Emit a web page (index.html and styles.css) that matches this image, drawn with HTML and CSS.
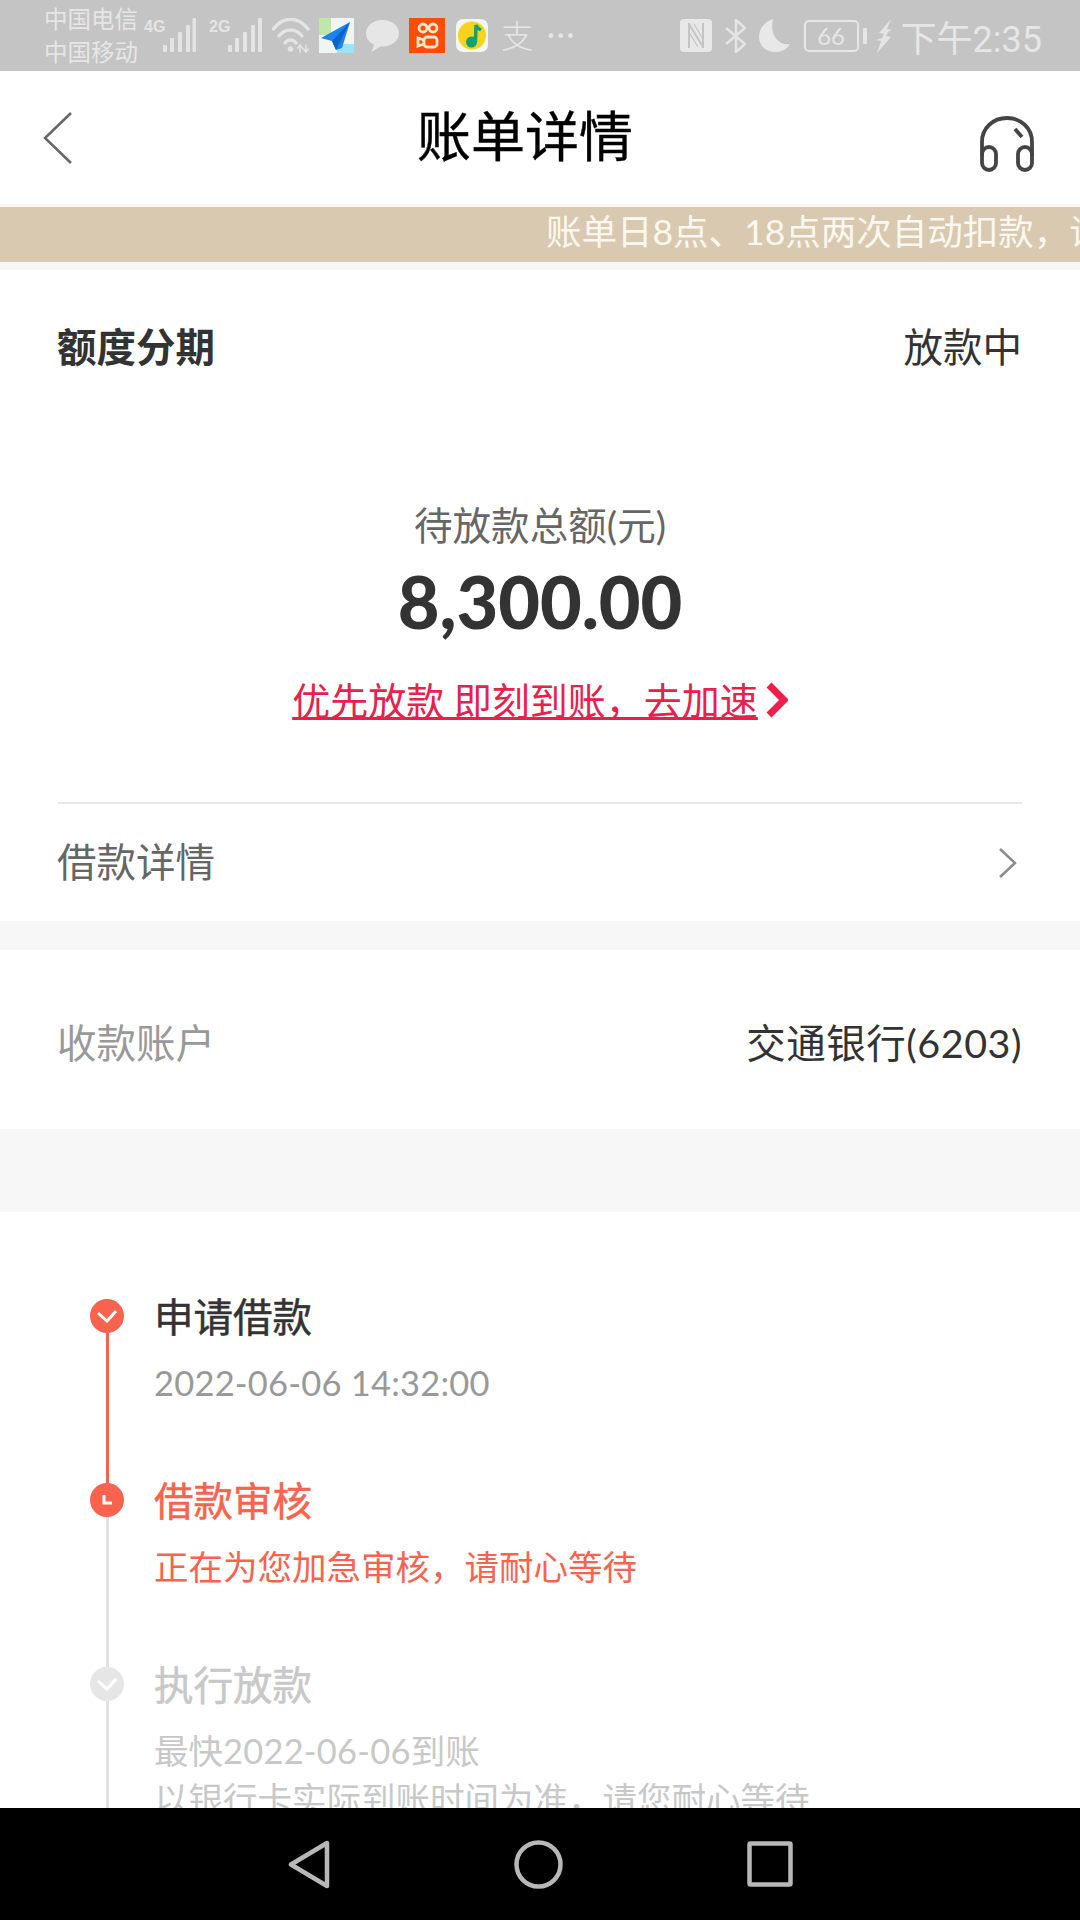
FILE: index.html
```html
<!DOCTYPE html>
<html lang="zh-CN">
<head>
    <meta charset="UTF-8">
    <title>账单详情</title>
    <link rel="stylesheet" href="styles.css">
</head>
<body>
    <div class="status-bar">
        <div class="status-left">
            <div class="carrier"><span>中国电信</span><span>中国移动</span></div>
            <svg class="signal" width="52" height="35" viewBox="0 0 52 35">
                <text x="0" y="14" class="net-type">4G</text>
                <g fill="#e4e4e4"><rect x="19" y="27" width="4" height="7" rx="1"/><rect x="26" y="20" width="4" height="14" rx="1"/><rect x="34" y="14" width="4" height="20" rx="1"/><rect x="42" y="7" width="4" height="27" rx="1"/><rect x="48.500" y="0" width="3.500" height="34" rx="1"/></g>
            </svg>
            <svg class="signal gap-13" width="53" height="35" viewBox="0 0 53 35">
                <text x="0" y="14" class="net-type">2G</text>
                <g fill="#e4e4e4"><rect x="19" y="27" width="4" height="7" rx="1"/><rect x="26" y="20" width="4" height="14" rx="1"/><rect x="34" y="14" width="4" height="20" rx="1"/><rect x="42" y="7" width="4" height="27" rx="1"/><rect x="49" y="0" width="4" height="34" rx="1"/></g>
            </svg>
            <svg class="gap-10" width="38" height="35" viewBox="0 0 38 35" fill="none" stroke="#e4e4e4" stroke-width="3.400" stroke-linecap="round">
                <path d="M1.500 11C11 -2 26 -2 36 11"/>
                <path d="M7 18C13 10 24 10 30 18"/>
                <path d="M13 25C16 21 21 21 24 25"/>
                <circle cx="18.500" cy="31" r="2.800" fill="#e4e4e4" stroke="none"/>
                <path d="M28 34v-7M25.500 30l2.500-3 2.500 3M34 27v7M31.500 31l2.500 3 2.500-3" stroke-width="1.600"/>
            </svg>
            <svg class="gap-9" width="35" height="35" viewBox="0 0 35 35">
                <rect width="35" height="35" fill="#f0f5f2"/>
                <rect width="12" height="17" fill="#bfe8a8"/>
                <rect x="18" y="26" width="17" height="9" fill="#9fe2f7"/>
                <path d="M31 4L2 20l11 3 4 9 6-2z" fill="#1c82f0"/>
                <path d="M31 4L13 23l4 9z" fill="#0d63c9"/>
            </svg>
            <svg class="gap-12" width="33" height="32" viewBox="0 0 33 32">
                <path d="M16.500 0C7.400 0 0 5.800 0 13.300c0 5 3.200 9.200 8 11.500L5.500 32l9-5.400h2C25.600 26.600 33 20.800 33 13.300S25.600 0 16.500 0z" fill="#e6e6e6"/>
            </svg>
            <svg class="gap-10" width="36" height="35" viewBox="0 0 36 35">
                <rect width="36" height="35" fill="#fb4c0a"/>
                <g fill="none" stroke="#fbe6c8" stroke-width="2.800">
                    <circle cx="14" cy="10" r="4"/>
                    <circle cx="24" cy="10" r="4"/>
                    <rect x="15" y="19" width="13" height="10" rx="3"/>
                    <path d="M15 22l-6-2v8l6-2"/>
                </g>
            </svg>
            <svg class="gap-11" width="32" height="33" viewBox="0 0 32 33">
                <rect width="32" height="33" rx="7" fill="#f6f6f0"/>
                <circle cx="16" cy="16.500" r="14" fill="#f8d21c"/>
                <circle cx="15.500" cy="23" r="5.500" fill="#12a26f"/>
                <path d="M19.500 23L20 6c1 3 3 4 5 5" fill="none" stroke="#12a26f" stroke-width="3.500"/>
            </svg>
            <span class="status-text alipay">支</span>
            <span class="status-text dots">···</span>
        </div>
        <div class="status-right">
            <svg width="32" height="33" viewBox="0 0 32 33">
                <rect width="32" height="33" rx="4" fill="#e8e8e8"/>
                <path d="M9 4v25M23 4v25M9 5l14 23" fill="none" stroke="#c4c4c4" stroke-width="2"/>
                <path d="M14 5l9 15M9 13l9 15" fill="none" stroke="#c4c4c4" stroke-width="1.200"/>
            </svg>
            <svg class="gap-13" width="21" height="34" viewBox="0 0 21 34" fill="none" stroke="#e4e4e4" stroke-width="2.600">
                <path d="M1 9l19 16-9 8V1l9 8L1 25"/>
            </svg>
            <svg class="gap-13" width="31" height="33" viewBox="0 0 31 33">
                <path d="M14 0C5 3 0 10 0 18c0 9 7 15 16 15 7 0 12-3 15-8-11 2-21-9-17-25z" fill="#e8e8e8"/>
            </svg>
            <div class="battery gap-14"><span>66</span></div>
            <span class="battery-tip"></span>
            <svg class="gap-9" width="16" height="34" viewBox="0 0 16 34">
                <path d="M15 0L3 14l5 1-2 4-6 2 5 1-4 12L15 18l-5-1 2-4 4-2-5-1z" fill="#e4e4e4"/>
            </svg>
            <span class="status-text time">下午2:35</span>
        </div>
    </div>

    <div class="title-bar">
        <svg class="back" width="29" height="52" viewBox="0 0 29 52" fill="none" stroke="#666" stroke-width="2.500">
            <path d="M28 1L2 26l26 25"/>
        </svg>
        <div class="page-title">账单详情</div>
        <svg class="service" width="58" height="56" viewBox="0 0 58 56" fill="none" stroke="#444" stroke-width="3.800">
            <path d="M4 40V26C4 12 15 2 29 2s25 10 25 24v14"/>
            <path d="M37 13l7 8"/>
            <rect x="4" y="31" width="14" height="23" rx="7"/>
            <rect x="40" y="31" width="14" height="23" rx="7"/>
        </svg>
    </div>

    <div class="notice"><span>账单日8点、18点两次自动扣款，请保持余额充足</span></div>

    <div class="content">
        <section class="summary">
            <div class="summary-head">
                <span class="product">额度分期</span>
                <span class="state">放款中</span>
            </div>
            <div class="pending-label">待放款总额(元)</div>
            <div class="amount">8,300.00</div>
            <div class="speed-up">
                <a class="speed-link">优先放款 即刻到账，去加速</a>
                <svg width="22" height="36" viewBox="0 0 22 36" fill="none" stroke="#ef1f4b" stroke-width="7">
                    <path d="M3 3l15 15L3 33"/>
                </svg>
            </div>
            <div class="divider"></div>
            <div class="loan-row">
                <span class="loan-label">借款详情</span>
                <svg width="20" height="32" viewBox="0 0 20 32" fill="none" stroke="#8c8c8c" stroke-width="2.500">
                    <path d="M2 2l15 14L2 30"/>
                </svg>
            </div>
        </section>

        <section class="account">
            <span class="account-label">收款账户</span>
            <span class="account-value">交通银行(6203)</span>
        </section>

        <section class="timeline">
            <div class="step done">
                <div class="rail">
                    <span class="dot"><svg width="20" height="14" viewBox="0 0 20 14" fill="none" stroke="#fff" stroke-width="3"><path d="M1 4l9 8 9-10"/></svg></span>
                    <span class="line"></span>
                </div>
                <div class="step-body">
                    <div class="step-title">申请借款</div>
                    <div class="step-sub step-date">2022-06-06 14:32:00</div>
                </div>
            </div>
            <div class="step active">
                <div class="rail">
                    <span class="dot"><svg width="12" height="12" viewBox="0 0 12 12" fill="none" stroke="#fff" stroke-width="3"><path d="M3 1v8h8"/></svg></span>
                    <span class="line"></span>
                </div>
                <div class="step-body">
                    <div class="step-title">借款审核</div>
                    <div class="step-sub">正在为您加急审核，请耐心等待</div>
                </div>
            </div>
            <div class="step todo">
                <div class="rail">
                    <span class="dot"><svg width="20" height="14" viewBox="0 0 20 14" fill="none" stroke="#fff" stroke-width="3"><path d="M1 4l9 8 9-10"/></svg></span>
                    <span class="line"></span>
                </div>
                <div class="step-body">
                    <div class="step-title">执行放款</div>
                    <div class="step-sub">最快<span class="step-date">2022-06-06</span>到账<br>以银行卡实际到账时间为准，请您耐心等待</div>
                </div>
            </div>
        </section>
    </div>

    <div class="nav-bar">
        <svg width="42" height="49" viewBox="0 0 42 49" fill="none" stroke="#b8b8b8" stroke-width="4.500" stroke-linejoin="round">
            <path d="M39 3v43L3 24.500z"/>
        </svg>
        <svg width="49" height="49" viewBox="0 0 49 49" fill="none" stroke="#b8b8b8" stroke-width="4.500">
            <circle cx="24.500" cy="24.500" r="22"/>
        </svg>
        <svg width="46" height="46" viewBox="0 0 46 46" fill="none" stroke="#b8b8b8" stroke-width="4.500" stroke-linejoin="round">
            <rect x="2.500" y="2.500" width="41" height="41" rx="1"/>
        </svg>
    </div>
</body>
</html>
```

FILE: styles.css
```css
body {
    margin: 0;
    width: 1080px;
    height: 1920px;
    display: flex;
    flex-direction: column;
    overflow: hidden;
    background-color: #f7f7f8;
    font-family: Lato, "Noto Sans CJK SC", sans-serif;
    color: #333;
}

svg {
    display: block;
    flex: none;
}

/* Status bar */
.status-bar {
    height: 71px;
    flex: none;
    display: flex;
    justify-content: space-between;
    align-items: center;
    padding: 0 38px 0 44px;
    background-color: #c4c4c4;
    color: #e6e6e6;
}

.status-left,
.status-right {
    display: flex;
    align-items: center;
}

.carrier {
    display: flex;
    flex-direction: column;
    width: 93px;
    margin-right: 7px;
    white-space: nowrap;
    font-size: 23.500px;
    line-height: 33px;
}

.net-type {
    font-family: "Liberation Sans", sans-serif;
    font-size: 16px;
    font-weight: 700;
    fill: #e4e4e4;
}

.gap-9 { margin-left: 9px; }
.gap-10 { margin-left: 10px; }
.gap-11 { margin-left: 11px; }
.gap-12 { margin-left: 12px; }
.gap-13 { margin-left: 13px; }
.gap-14 { margin-left: 14px; }

.alipay {
    margin: 0 0 3px 13px;
    font-size: 32px;
    font-weight: 300;
}

.dots {
    margin: 0 0 6px 14px;
    font-size: 30px;
    letter-spacing: 2px;
}

.battery {
    width: 55px;
    height: 32px;
    box-sizing: border-box;
    border: 2.500px solid #e6e6e6;
    border-radius: 5px;
    text-align: center;
    font-size: 24px;
    line-height: 27px;
}

.battery-tip {
    width: 4px;
    height: 16px;
    margin-left: 4px;
    border-radius: 1px;
    background-color: #e6e6e6;
}

.time {
    margin-left: 9px;
    font-family: Roboto, "Noto Sans CJK SC", sans-serif;
    font-size: 36px;
}

/* Title bar */
.title-bar {
    height: 133px;
    flex: none;
    display: flex;
    justify-content: space-between;
    align-items: center;
    padding: 0 44px 0 43px;
    background-color: #fff;
}

.page-title {
    margin-bottom: 2px;
    font-size: 54px;
    line-height: 60px;
    color: #000;
    -webkit-text-stroke: 0.4px #000;
}

.service {
    margin-top: 13px;
}

/* Notice */
.notice {
    height: 55px;
    flex: none;
    margin-top: 3px;
    padding-left: 546px;
    overflow: hidden;
    white-space: nowrap;
    background-color: #d8c9b0;
    color: #fdf8ef;
    font-size: 35.500px;
    line-height: 50px;
}

.content {
    flex: 1;
    min-height: 0;
    margin-top: 8px;
    overflow: hidden;
}

/* Summary card */
.summary {
    height: 651px;
    background-color: #fff;
}

.summary-head {
    height: 149px;
    padding: 0 58px 7px 57px;
    display: flex;
    justify-content: space-between;
    align-items: center;
    font-size: 39.500px;
}

.product {
    font-weight: 700;
}

.pending-label {
    margin-top: 74px;
    text-align: center;
    font-size: 38.600px;
    line-height: 50px;
    color: #666;
}

.amount {
    margin-top: 6px;
    text-align: center;
    font-size: 72px;
    font-weight: 900;
    line-height: 90px;
}

.speed-up {
    display: flex;
    justify-content: center;
    align-items: center;
    gap: 8px;
    margin-top: 29px;
    color: #e8204c;
    font-size: 38px;
    line-height: 50px;
}

.speed-link {
    text-decoration: underline;
    text-decoration-thickness: 2.500px;
}

.divider {
    height: 2px;
    margin: 77px 58px 0;
    background-color: #e8e8e8;
}

.loan-row {
    height: 117px;
    display: flex;
    justify-content: space-between;
    align-items: center;
    padding: 0 62px 0 57px;
    font-size: 39.500px;
    color: #666;
}

.loan-label {
    margin-bottom: 7px;
}

/* Account */
.account {
    height: 178px;
    margin-top: 29px;
    padding: 1px 58px 0 57px;
    display: flex;
    justify-content: space-between;
    align-items: center;
    background-color: #fff;
    font-size: 39.500px;
}

.account-label {
    color: #999;
}

.account-value {
    letter-spacing: 0.500px;
}

/* Timeline */
.timeline {
    margin-top: 83px;
    padding: 87px 0 0 90px;
    background-color: #fff;
    height: 600px;
}

.step {
    height: 184px;
    display: flex;
}

.rail {
    width: 34px;
    display: flex;
    flex-direction: column;
    align-items: center;
}

.dot {
    width: 34px;
    height: 34px;
    flex: none;
    display: flex;
    justify-content: center;
    align-items: center;
    border-radius: 50%;
}

.line {
    width: 3px;
    flex: 1;
}

.step-body {
    margin: -7px 0 0 30px;
}

.step-title {
    font-size: 39.500px;
    line-height: 50px;
    -webkit-text-stroke: 0.5px currentColor;
}

.step-sub {
    margin-top: 17px;
    font-size: 34.500px;
    line-height: 48px;
    color: #999;
}

.step-date {
    letter-spacing: 0.200px;
}

.done .dot,
.done .line,
.active .dot {
    background-color: #f7634e;
}

.active .line,
.todo .line {
    background-color: #e2e2e2;
}

.active .step-title,
.active .step-sub {
    color: #f7634e;
}

.todo .dot {
    background-color: #e6e6e6;
}

.todo .step-title,
.todo .step-sub {
    color: #c8c8c8;
}

.todo {
    height: 300px;
}

/* Navigation bar */
.nav-bar {
    height: 112px;
    flex: none;
    display: flex;
    justify-content: center;
    align-items: center;
    gap: 184px;
    background-color: #000;
}
```
